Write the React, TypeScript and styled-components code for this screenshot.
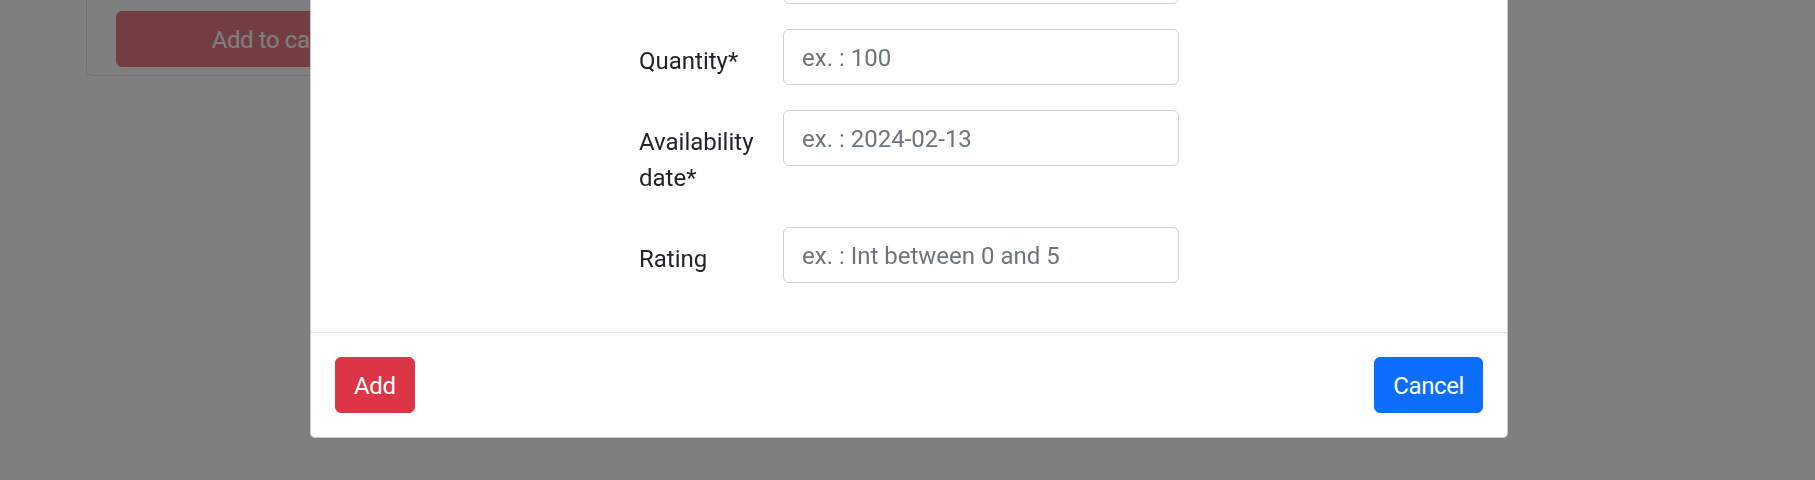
import React from 'react';
import styled, { createGlobalStyle } from 'styled-components';

const GlobalStyle = createGlobalStyle`
	html,
	body {
		margin: 0;
		height: 100%;
	}

	body {
		background: #fff;
		color: #212529;
		font-family: 'Segoe UI', Roboto, 'Liberation Sans', sans-serif;
		overflow: hidden;
	}

	* {
		box-sizing: border-box;
	}
`;

const Page = styled.div`
	height: 480px;
	padding-left: 86px;
`;

const ProductCard = styled.div`
	width: 365px;
	padding: 11px 29px 8px;
	border: 1px solid rgba(0, 0, 0, 0.1);
	border-top: 0;
	border-radius: 0 0 6px 6px;
`;

const Button = styled.button<{ $variant: 'danger' | 'primary'; $block?: boolean }>`
	display: ${({ $block }) => ($block ? 'block' : 'inline-block')};
	width: ${({ $block }) => ($block ? '100%' : 'auto')};
	margin: ${({ $block }) => ($block ? '0' : '6px')};
	padding: 10px 18px 8px;
	border: 1px solid ${({ $variant }) => ($variant === 'danger' ? '#dc3545' : '#0d6efd')};
	border-radius: 6px;
	background: ${({ $variant }) => ($variant === 'danger' ? '#dc3545' : '#0d6efd')};
	color: #fff;
	font-family: inherit;
	font-size: 24px;
	line-height: 36px;
	letter-spacing: -0.4px;
	text-align: center;
	cursor: pointer;

	&:disabled {
		opacity: 0.65;
	}
`;

const Backdrop = styled.div`
	position: fixed;
	inset: 0;
	display: flex;
	justify-content: center;
	align-items: flex-end;
	padding: 0 0 42px 3px;
	background: rgba(0, 0, 0, 0.5);
	overflow: hidden;
`;

const Dialog = styled.div`
	flex-shrink: 0;
	width: 1198px;
	display: flex;
	flex-direction: column;
	background: #fff;
	border: 1px solid rgba(0, 0, 0, 0.2);
	border-radius: 5px;
`;

const DialogBody = styled.div`
	padding: 24px;
`;

const Form = styled.form`
	width: 585px;
	margin: 0 auto;
`;

const FormRow = styled.div`
	display: grid;
	grid-template-columns: 144px 441px;
	margin-bottom: 24px;
`;

const Label = styled.label`
	padding: 14px 22.5px 7px;
	font-size: 24px;
	line-height: 36px;
	color: #212529;
`;

const Field = styled.div`
	padding: 0 22.5px;
`;

const Input = styled.input`
	display: block;
	width: 100%;
	height: 56px;
	padding: 10px 18px 8px;
	border: 1px solid #ced4da;
	border-radius: 6px;
	background: #fff;
	color: #495057;
	font-family: inherit;
	font-size: 24px;
	line-height: 36px;

	&::placeholder {
		color: #6c757d;
		opacity: 1;
	}
`;

const DialogFooter = styled.div`
	display: flex;
	justify-content: space-between;
	align-items: center;
	padding: 18px;
	border-top: 1px solid #dee2e6;
`;

const fields = [
	{ id: 'price', label: 'Price*', placeholder: 'ex. : 19.99' },
	{ id: 'quantity', label: 'Quantity*', placeholder: 'ex. : 100' },
	{ id: 'availability', label: 'Availability date*', placeholder: 'ex. : 2024-02-13' },
	{ id: 'rating', label: 'Rating', placeholder: 'ex. : Int between 0 and 5' }
];

const App = () => {
	return (
		<>
			<GlobalStyle />
			<Page>
				<ProductCard>
					<Button $variant="danger" $block disabled>
						Add to cart
					</Button>
				</ProductCard>
			</Page>
			<Backdrop>
				<Dialog role="dialog">
					<DialogBody>
						<Form onSubmit={(e) => e.preventDefault()}>
							{fields.map((field) => (
								<FormRow key={field.id}>
									<Label htmlFor={field.id}>{field.label}</Label>
									<Field>
										<Input id={field.id} type="text" placeholder={field.placeholder} />
									</Field>
								</FormRow>
							))}
						</Form>
					</DialogBody>
					<DialogFooter>
						<Button $variant="danger">Add</Button>
						<Button $variant="primary">Cancel</Button>
					</DialogFooter>
				</Dialog>
			</Backdrop>
		</>
	);
};

export default App;
